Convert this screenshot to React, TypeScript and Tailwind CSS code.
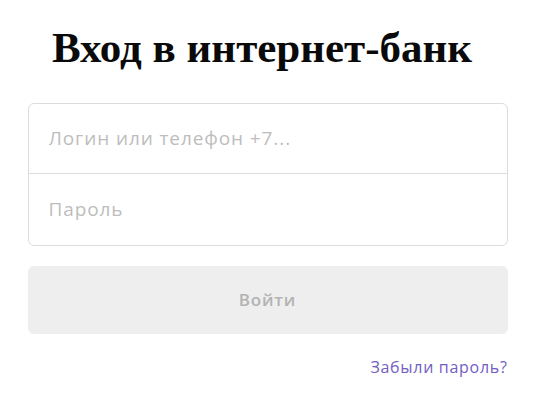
export default function App() {
  return (
    <div className="w-[535px] h-[406px] bg-white" style={{ fontFamily: '"Open Sans", "Liberation Sans", sans-serif' }}>
      <div className="mx-auto w-[480px] pt-[20px]">
        <h1
          className="text-center pr-[11px] text-[43px] leading-[56px] font-bold text-[#0a0a0a]"
          style={{ fontFamily: '"Liberation Serif", "DejaVu Serif", serif' }}
        >
          Вход в интернет-банк
        </h1>
        <div className="mt-[27px] rounded-[6px] border border-[#dcdcdc]">
          <div className="h-[70px] flex items-center px-[20px] border-b border-[#dcdcdc]">
            <input
              className="w-full outline-none text-[19px] tracking-[0.9px] text-[#333] placeholder:text-[#bdbdbd]"
              placeholder="Логин или телефон +7..."
            />
          </div>
          <div className="h-[71px] flex items-center px-[20px]">
            <input
              type="password"
              className="w-full outline-none text-[19px] tracking-[0.9px] text-[#333] placeholder:text-[#bdbdbd]"
              placeholder="Пароль"
            />
          </div>
        </div>
        <button className="mt-[20px] w-full h-[68px] rounded-[6px] bg-[#eeeeee] text-[17px] tracking-[0.8px] font-semibold text-[#b3b3b3]">
          Войти
        </button>
        <div className="mt-[21px] flex justify-end">
          <a className="text-[16px] text-[#7160c2] tracking-[0.7px]">Забыли пароль?</a>
        </div>
      </div>
    </div>
  );
}
